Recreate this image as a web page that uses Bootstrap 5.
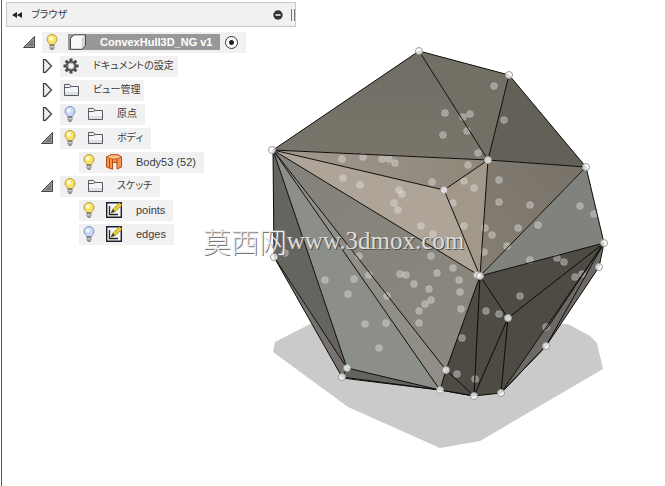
<!DOCTYPE html>
<html lang="ja">
<head>
<meta charset="utf-8">
<meta name="viewport" content="width=device-width, initial-scale=1">
<title>ConvexHull3D_NG v1</title>
<link href="https://cdn.jsdelivr.net/npm/bootstrap@5.3.0/dist/css/bootstrap.min.css" rel="stylesheet">
<style>
  body { font-family: "Liberation Sans", "Noto Sans CJK JP", sans-serif; font-size: 11px; line-height: 16px; color: #3c3c3c; background: #fff; }
  .workspace { border-left: 1px solid #35618c; margin-left: 1px; }
  .browser-panel { width: 290px; margin: 2px 0 0 4px; z-index: 1; }
  .panel-head { height: 25px; background: #f1f1f1; border: 1px solid #c9c9c9; }
  .jp { font-size: 10px; font-feature-settings: "palt"; }
  .grip { width: 4px; height: 12px; border: solid #777; border-width: 0 1px; }
  .icon-btn { background: none; border: 0; padding: 0; display: flex; flex: none; color: inherit; }
  .tree { padding-top: 3px; }
  .tree-row { height: 24px; }
  .lvl-0 { padding-left: 16px; }
  .lvl-1 { padding-left: 34px; }
  .lvl-2 { padding-left: 73px; }
  .toggle { width: 14px; margin-right: 6px; }
  .chip { height: 21px; background: #f1f1f1; padding: 0 8px 0 2px; }
  .bulb { width: 16px; }
  .kind { width: 18px; margin: 0 8px; }
  .name { margin-left: 5px; }
  .wide-name { margin-left: 13px; margin-right: -4px; }
  .root-name { height: 16px; background: #989898; color: #fff; font-weight: bold; padding-right: 8px; }
  .root-name .name { margin-left: 14px; }
  .active-pick { appearance: none; width: 13px; height: 13px; border: 1px solid #333; border-radius: 50%; background: radial-gradient(circle, #222 0 2px, #fff 3px); margin: 0 0 0 5px; }
  .scene { height: 100vh; }
  .edges { fill: none; stroke: #0c0c0a; stroke-width: 1; stroke-linejoin: round; }
  .watermark { font-family: "Liberation Serif", "Noto Sans CJK SC", serif; font-size: 25px; line-height: 32px; padding-bottom: 4px; color: #dedcd8; text-shadow: 1px 1px 0 #55534f, 0 0 1px #888; pointer-events: none; z-index: 2; }
  .watermark span { font-family: "Noto Sans CJK SC", sans-serif; font-size: 28px; font-weight: 300; color: #eee; text-shadow: 1px 1px 0 #777; }
</style>
<script src="https://cdn.jsdelivr.net/npm/bootstrap@5.3.0/dist/js/bootstrap.bundle.min.js"></script>
</head>
<body>
<svg class="d-none" xmlns="http://www.w3.org/2000/svg">
  <symbol id="open" viewBox="0 0 14 14"><path d="M12.500 1.500V12.500H1.500Z" fill="#999" stroke="#444"/><path d="M11 5v6H5z" fill="#777"/></symbol>
  <symbol id="closed" viewBox="0 0 14 14"><path d="M3.500 .7H5.500L11.500 7L5.500 13.300H3.500Z" fill="#eee" stroke="#444" stroke-width="1.300"/></symbol>
  <symbol id="bulb-on" viewBox="0 0 16 16"><path d="M5.500 10.500C5.500 9 3 8 3 5.300A5 4.800 0 0 1 13 5.300C13 8 10.500 9 10.500 10.500Z" fill="#f8e364" stroke="#b39b45"/><ellipse cx="7" cy="4.500" rx="2" ry="2.200" fill="#fffbd0"/><path d="M6 11h4v3l-1 1.500H7L6 14z" fill="#9a9a9a" stroke="#666" stroke-width=".7"/><path d="M6 12.800h4" stroke="#ddd"/></symbol>
  <symbol id="bulb-off" viewBox="0 0 16 16"><path d="M5.500 10.500C5.500 9 3 8 3 5.300A5 4.800 0 0 1 13 5.300C13 8 10.500 9 10.500 10.500Z" fill="#c6d6f6" stroke="#8493b8"/><ellipse cx="7" cy="4.500" rx="2" ry="2.200" fill="#f1f6ff"/><path d="M6 11h4v3l-1 1.500H7L6 14z" fill="#9a9a9a" stroke="#666" stroke-width=".7"/><path d="M6 12.800h4" stroke="#ddd"/></symbol>
  <symbol id="folder" viewBox="0 0 18 16"><path d="M2.500 13.500V2.500H7.500L9 4.500H16.500V13.500Z" fill="#f4f5f7" stroke="#545a66"/><path d="M2.500 5.500H7.500L9 4.500" fill="none" stroke="#545a66"/><path d="M3 10h13v3H3z" fill="#dddfe3"/></symbol>
  <symbol id="gear" viewBox="0 0 18 16"><g stroke="#484848" stroke-width="3"><path d="M9 .5V15.500M1.500 8H16.500M3.700 2.700L14.300 13.300M14.300 2.700L3.700 13.300"/></g><circle cx="9" cy="8" r="5.300" fill="#505050"/><circle cx="9" cy="8" r="3.500" fill="#aaa"/><circle cx="9" cy="8" r="2.500" fill="#f3f3f3"/></symbol>
  <symbol id="cube" viewBox="0 0 18 16"><path d="M2.500 4.500L6 .8H17.500V11.500L14 15.300H2.500Z" fill="#fafafa" stroke="#444"/><path d="M13.500 4.500L17 1.500V11.500L13.500 14.500Z" fill="#d4d4d4"/></symbol>
  <symbol id="body" viewBox="0 0 18 16"><path d="M1.500 3L6 .8H13L16.500 3V13L12 15V8.500H7.500V15.300L1.500 13Z" fill="#f69450" stroke="#b34d0c"/><path d="M1.500 3L6.500 5H12L16.500 3L13 .8H6Z" fill="#ffc38e" stroke="#b34d0c" stroke-width=".8"/><path d="M4.500 4.500V14M7.500 5V9M12 5V9" fill="none" stroke="#b34d0c"/></symbol>
  <symbol id="sketch" viewBox="0 0 18 16"><path d="M1.700 .7H16.300V15.300H1.700Z" fill="#f7f9fb" stroke="#16202c" stroke-width="1.400"/><path d="M4.500 4V12.500H13" fill="none" stroke="#222" stroke-width="1.300"/><path d="M6 11L8 7L14.500 .8L17 3.200L10 9.500Z" fill="#f0cf31" stroke="#8f7821" stroke-width=".7"/><path d="M6 11L8 7L10 9.500Z" fill="#3c3c3c"/></symbol>
</svg>

<main class="workspace position-relative min-vh-100 overflow-hidden">
  <svg class="scene position-absolute top-0 start-0 w-100" viewBox="2 0 663 486" role="img" aria-label="3D convex hull">
    <defs>
      <linearGradient id="gTop" x1="0" y1="0" x2="0" y2="1"><stop stop-color="#716d64"/><stop offset="1" stop-color="#7a756b"/></linearGradient>
      <linearGradient id="gNear" x1="0" y1="0" x2="1" y2="0"><stop stop-color="#a1998d"/><stop offset="1" stop-color="#8f867a"/></linearGradient>
      <linearGradient id="gRight" x1="0" y1="1" x2="1" y2="0"><stop stop-color="#857f73"/><stop offset="1" stop-color="#777168"/></linearGradient>
      <linearGradient id="gMid" x1="0" y1="0" x2="1" y2="1"><stop stop-color="#83817b"/><stop offset="1" stop-color="#8d887e"/></linearGradient>
    </defs>
    <path fill="#cacaca" d="M273 352L275 342L310 324H568L590 336L597 343L603 369L480 441L440 448L348 407Z"/>
    <path fill="url(#gTop)" d="M273 150L419 51L488 160Z"/>
    <path fill="#736f65" d="M419 51L509 75L488 160Z"/>
    <path fill="#636058" d="M509 75L586 167L488 160Z"/>
    <path fill="url(#gNear)" d="M273 150L488 160L444 190Z"/>
    <path fill="#aea598" d="M273 150L444 190L480 276Z"/>
    <path fill="#a19889" d="M488 160L444 190L480 276Z"/>
    <path fill="url(#gRight)" d="M488 160L586 167L480 276Z"/>
    <path fill="#80827d" d="M586 167L604 243L480 276Z"/>
    <path fill="url(#gMid)" d="M273 150L480 276L446 370Z"/>
    <path fill="#918e87" d="M273 150L446 370L440 390Z"/>
    <path fill="#8c8e88" d="M273 150L440 390L347 368Z"/>
    <path fill="#65655f" d="M273 150L347 368L274 257Z"/>
    <path fill="#77726e" d="M274 257L347 368L342 377Z"/>
    <path fill="#62645e" d="M347 368L440 390L342 377Z"/>
    <path fill="#4e4a44" d="M480 276L604 243L501 393L474 396L440 390L446 370Z"/>
    <path fill="#6d6a65" d="M604 243L599 267L546 346L501 393Z"/>
    <g fill="#e4e3de" fill-opacity=".43" stroke="#ddd" stroke-opacity=".25" id="innerPoints"></g>
    <path class="edges" d="M273 150L419 51L509 75L586 167L604 243L599 267L546 346L501 393L474 396L440 390L342 377L274 257ZM419 51L488 160L509 75M273 150L488 160L586 167L480 276L604 243M488 160L444 190L480 276L488 160M273 150L444 190M273 150L480 276L446 370L440 390M273 150L446 370L474 396M273 150L440 390L347 368ZM274 257L347 368L342 377M480 276L474 396L508 318L480 276M508 318L501 393L604 243L508 318M501 393L546 346L604 243M604 243L546 330"/>
    <path class="edges" stroke-width="2" d="M342 378L440 390L474 396"/>
    <g fill="#fff" fill-opacity=".8" stroke="#999" id="hullPoints"></g>
  </svg>

  <section class="browser-panel position-relative" aria-label="ブラウザ">
    <header class="panel-head d-flex align-items-center ps-1">
      <button class="icon-btn" aria-label="折りたたむ"><svg width="12" height="8" viewBox="0 0 12 8"><path d="M6 1V7L1 4ZM11 1V7L6 4Z" fill="#222"/></svg></button>
      <span class="jp ms-2">ブラウザ</span>
      <button class="icon-btn ms-auto me-2" aria-label="最小化"><svg width="10" height="10" viewBox="0 0 10 10"><circle cx="5" cy="5" r="4.700" fill="#333"/><path d="M2.500 5h5" stroke="#fff" stroke-width="1.500"/></svg></button>
      <span class="grip"></span>
    </header>
    <ul class="tree list-unstyled mb-0">
      <li class="tree-row lvl-0 d-flex align-items-center"><button class="icon-btn toggle" aria-label="閉じる"><svg width="14" height="14"><use href="#open"/></svg></button>
        <div class="chip d-flex align-items-center"><button class="icon-btn bulb" aria-label="表示"><svg width="16" height="16"><use href="#bulb-on"/></svg></button>
        <div class="root-name d-flex align-items-center ms-2"><svg width="18" height="16"><use href="#cube"/></svg><span class="name">ConvexHull3D_NG v1</span></div>
        <input class="active-pick" type="radio" name="active" checked aria-label="コンポーネントをアクティブ化"></div></li>
      <li class="tree-row lvl-1 d-flex align-items-center"><button class="icon-btn toggle" aria-label="開く"><svg width="14" height="14"><use href="#closed"/></svg></button>
        <div class="chip d-flex align-items-center"><svg width="18" height="16"><use href="#gear"/></svg><span class="jp wide-name">ドキュメントの設定</span></div></li>
      <li class="tree-row lvl-1 d-flex align-items-center"><button class="icon-btn toggle" aria-label="開く"><svg width="14" height="14"><use href="#closed"/></svg></button>
        <div class="chip d-flex align-items-center"><svg width="18" height="16"><use href="#folder"/></svg><span class="jp wide-name">ビュー管理</span></div></li>
      <li class="tree-row lvl-1 d-flex align-items-center"><button class="icon-btn toggle" aria-label="開く"><svg width="14" height="14"><use href="#closed"/></svg></button>
        <div class="chip d-flex align-items-center"><button class="icon-btn bulb" aria-label="表示"><svg width="16" height="16"><use href="#bulb-off"/></svg></button><svg class="kind" height="16"><use href="#folder"/></svg><span class="jp name">原点</span></div></li>
      <li class="tree-row lvl-1 d-flex align-items-center"><button class="icon-btn toggle" aria-label="閉じる"><svg width="14" height="14"><use href="#open"/></svg></button>
        <div class="chip d-flex align-items-center"><button class="icon-btn bulb" aria-label="表示"><svg width="16" height="16"><use href="#bulb-on"/></svg></button><svg class="kind" height="16"><use href="#folder"/></svg><span class="jp name">ボディ</span></div></li>
      <li class="tree-row lvl-2 d-flex align-items-center">
        <div class="chip d-flex align-items-center"><button class="icon-btn bulb" aria-label="表示"><svg width="16" height="16"><use href="#bulb-on"/></svg></button><svg class="kind" height="16"><use href="#body"/></svg><span class="name">Body53 (52)</span></div></li>
      <li class="tree-row lvl-1 d-flex align-items-center"><button class="icon-btn toggle" aria-label="閉じる"><svg width="14" height="14"><use href="#open"/></svg></button>
        <div class="chip d-flex align-items-center"><button class="icon-btn bulb" aria-label="表示"><svg width="16" height="16"><use href="#bulb-on"/></svg></button><svg class="kind" height="16"><use href="#folder"/></svg><span class="jp name">スケッチ</span></div></li>
      <li class="tree-row lvl-2 d-flex align-items-center">
        <div class="chip d-flex align-items-center"><button class="icon-btn bulb" aria-label="表示"><svg width="16" height="16"><use href="#bulb-on"/></svg></button><svg class="kind" height="16"><use href="#sketch"/></svg><span class="name">points</span></div></li>
      <li class="tree-row lvl-2 d-flex align-items-center">
        <div class="chip d-flex align-items-center"><button class="icon-btn bulb" aria-label="表示"><svg width="16" height="16"><use href="#bulb-off"/></svg></button><svg class="kind" height="16"><use href="#sketch"/></svg><span class="name">edges</span></div></li>
    </ul>
  </section>

  <div class="watermark position-absolute top-0 start-0 w-100 h-100 d-flex align-items-center justify-content-center"><span>莫西网</span>www.3dmox.com</div>
</main>
<script>
  // Sketch points inside the hull and on its corners
  const inner = [[494,86],[445,113],[470,114],[463,117],[443,135],[467,131],[478,153],[504,120],[468,165],[499,180],[342,159],[363,157],[382,159],[389,159],[395,163],[343,178],[360,185],[399,190],[402,194],[394,203],[398,210],[421,226],[433,234],[432,182],[431,256],[400,274],[406,275],[437,273],[285,253],[359,256],[464,181],[474,188],[453,203],[464,226],[499,202],[530,205],[580,206],[594,214],[538,225],[518,228],[485,228],[492,235],[507,246],[484,252],[530,260],[557,258],[564,262],[575,277],[582,274],[453,268],[459,280],[325,280],[354,279],[369,275],[414,284],[429,289],[431,300],[425,304],[419,311],[419,323],[348,294],[387,296],[365,324],[386,323],[379,348],[460,292],[461,309],[462,338],[486,311],[499,314],[520,296],[546,327],[457,374],[475,379]];
  const hull = [[419,51],[509,75],[586,167],[604,243],[599,267],[546,346],[501,393],[474,396],[440,390],[446,370],[347,368],[342,377],[274,257],[272,150],[488,160],[444,190],[477,275],[480,276],[508,318]];
  const dots = (id, points, r) => {
    document.getElementById(id).innerHTML = points.map(([x, y]) => `<circle cx="${x}" cy="${y}" r="${r}"/>`).join("");
  };
  dots("innerPoints", inner, 3.5);
  dots("hullPoints", hull, 3.5);
</script>
</body>
</html>
